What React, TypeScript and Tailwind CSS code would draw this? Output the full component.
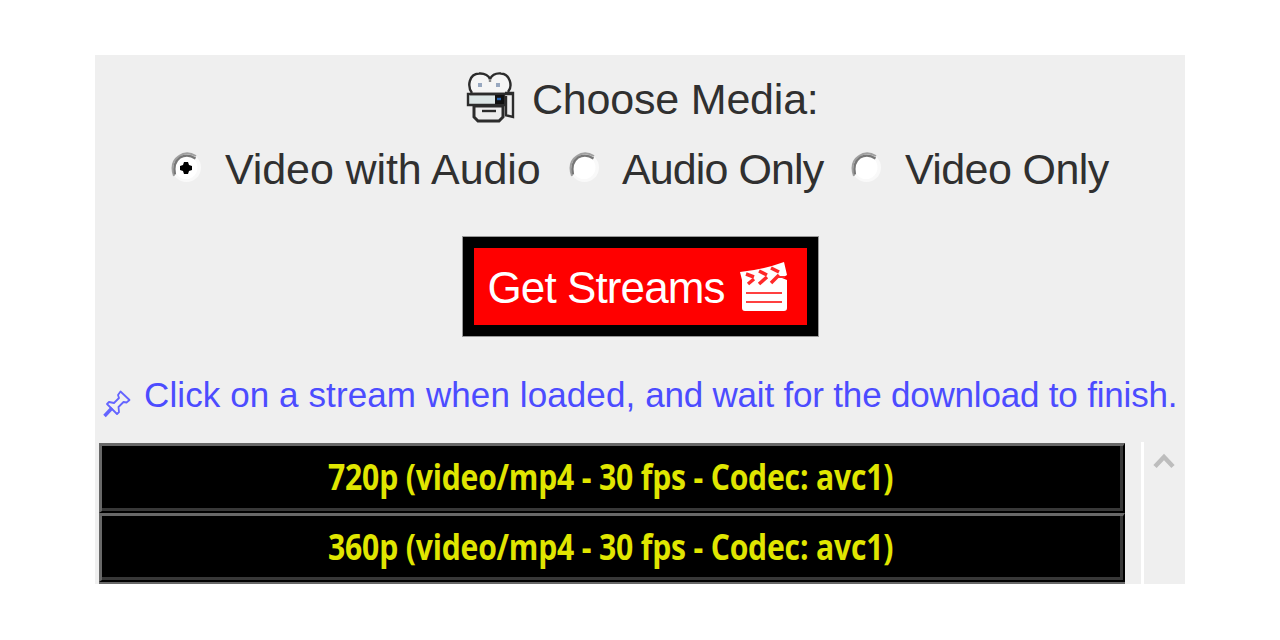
import React from "react";

function Radio({ checked = false }: { checked?: boolean }) {
  return (
    <svg width="32" height="32" viewBox="0 0 32 32" className="shrink-0">
      <circle cx="16.500" cy="15.500" r="14.500" fill="#f9f9f9" />
      <circle cx="16" cy="15.500" r="11.500" fill="#fff" />
      <path d="M4 24C1 15 3 8 9 4C14 .5 20 .5 26 4" fill="none" stroke="#a0a0a0" strokeWidth="2" />
      <path d="M5 22.500C3.500 15 5 9 10 5.500C15 2.800 20 2.800 25.500 6.500" fill="none" stroke="#777" strokeWidth="2.200" />
      {checked && <path d="M14 10h4l1 3 3 1v4l-3 1-1 3h-4l-1-3-3-1v-4l3-1z" fill="#000" />}
    </svg>
  );
}

function Camera() {
  return (
    <svg width="50" height="52" viewBox="0 0 50 52" fill="none" stroke="#2c2c2c" strokeWidth="2.400" className="shrink-0">
      <path d="M6 22C1 15 3 3 13 2.500C19 2 23 5 24 8C26 4 30 2 35 2.500C44 3 47 15 42 21" fill="#f5f5f5" />
      <path d="M14 12v4M32 12v4" stroke="#98a8c0" strokeWidth="4" />
      <path d="M24 8v3" stroke="#888" />
      <path d="M2 23h36v11H2z" fill="#dce6e6" />
      <path d="M4 23h44" strokeWidth="2.600" />
      <path d="M29 24h9v9h-9z" fill="#111" stroke="none" />
      <path d="M31 28h4" stroke="#2864b0" />
      <path d="M39 22h8v24l-8-2M40 25v19" />
      <path d="M8 35v11l4 4h21l4-4V35z" fill="#eee" strokeWidth="3" />
      <path d="M16 40h14" />
    </svg>
  );
}

function Clapper() {
  return (
    <svg width="48" height="50" viewBox="0 0 48 50" className="shrink-0">
      <path d="M0 10Q22 8 44 0l3 13-5 3 5 2v28q0 3-3 3H5q-3 0-3-3V18z" fill="#fff" />
      <path d="M6 12l8 3M8 22l6-5M19 9l8 4M19 22l8-7M31 6l8 4M31 21l8-8" fill="none" stroke="#ff2828" strokeWidth="3.500" />
      <path d="M38 15h7" stroke="#ff2828" strokeWidth="2" />
      <path d="M6 31h36M6 40h36" stroke="#ff4040" strokeWidth="2" />
    </svg>
  );
}

function Pin() {
  return (
    <svg width="28" height="28" viewBox="0 0 28 28" fill="none" stroke="#6464ff" strokeWidth="1.800" strokeLinejoin="round" className="shrink-0">
      <path d="M17.500 1.500l9 8.500-3 2.500-3-.5-5 5 .5 5-2 2L4 14l2-2 5 1 5-5-1-3z" />
      <path d="M9 18l-7.500 8" strokeWidth="3.500" />
    </svg>
  );
}

function StreamRow({ label }: { label: string }) {
  return (
    <div className="group flex h-[70px] w-[1026px] shrink-0 border-t-[3px] border-r-2 border-b-2 border-l-[3px] border-t-[#686868] border-r-black border-b-black border-l-[#686868] bg-black last:h-[69px]">
      <div className="flex flex-1 items-center justify-center border-r-[3px] border-b-[3px] border-[#383838] pb-0.5 group-last:pb-0">
        <span className="inline-block scale-x-[0.86] font-['Open_Sans',sans-serif] text-[35px] leading-none font-bold tracking-[-0.2px] whitespace-nowrap text-[#e0e600]">{label}</span>
      </div>
    </div>
  );
}

export default function App() {
  return (
    <div className="h-[640px] w-[1280px] bg-white px-[95px] pt-[55px] font-['Liberation_Sans',Arial,sans-serif] text-[#303030]">
      <main className="flex h-[529px] w-[1090px] flex-col overflow-hidden bg-[#efefef]">
        <div className="flex h-[82px] items-center pt-1.5 pl-[371px]">
          <div className="pb-1"><Camera /></div>
          <h1 className="ml-4 text-[43px] leading-none tracking-[-0.2px] whitespace-nowrap">Choose Media:</h1>
        </div>
        <div className="flex h-[62px] items-center pl-[75px] text-[43px] leading-none whitespace-nowrap">
          <Radio checked />
          <span className="ml-[23px] w-[343px] pt-0.5 tracking-[-0.1px]">Video with Audio</span>
          <Radio />
          <span className="ml-[22px] w-[228px] pt-0.5 tracking-[-0.9px]">Audio Only</span>
          <Radio />
          <span className="ml-[23px] pt-0.5 tracking-[-0.6px]">Video Only</span>
        </div>
        <div className="flex h-[138px] justify-center pt-[37px]">
          <button className="flex h-[101px] w-[357px] items-center border-12 border-black bg-[#f00] pl-[14px] text-[44px] leading-none tracking-[-0.9px] whitespace-nowrap text-white outline outline-[#999] -outline-offset-1">
            <span className="w-[252px] pt-0.5 text-left">Get Streams</span>
            <Clapper />
          </button>
        </div>
        <div className="flex h-[105px] items-center pt-2.5 pl-2 text-[35px] leading-none whitespace-nowrap text-[#4c4cff]">
          <div className="pt-[18px]"><Pin /></div>
          <p className="ml-[13px]">
            <span className="tracking-[0.1px]">Click on a stream when loaded, </span>
            <span className="tracking-[-0.19px]">and wait for the download to finish.</span>
          </p>
        </div>
        <div className="flex min-h-0 flex-1 pl-1">
          <div className="flex flex-col pt-px">
            <div className="flex flex-col">
              <StreamRow label="720p (video/mp4 - 30 fps - Codec: avc1)" />
              <StreamRow label="360p (video/mp4 - 30 fps - Codec: avc1)" />
            </div>
            <div className="h-1 shrink-0 bg-[#686868]" />
          </div>
          <div className="ml-4 flex flex-1 border-l-[3px] border-white pt-[10px] pl-[9px]">
            <svg width="22" height="18" viewBox="0 0 22 18"><path d="M2 14.500L11 5l9 9.500" fill="none" stroke="#bdbdbd" strokeWidth="4.500" /></svg>
          </div>
        </div>
      </main>
    </div>
  );
}
